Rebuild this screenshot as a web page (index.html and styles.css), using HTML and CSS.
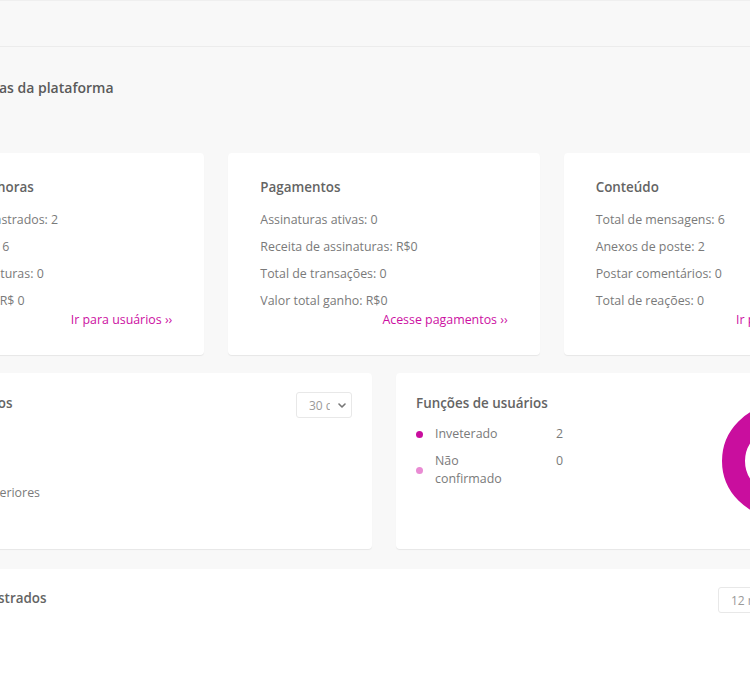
FILE: index.html
```html
<!DOCTYPE html>
<html lang="pt-BR">
<head>
<meta charset="utf-8">
<title>Estatísticas da plataforma</title>
<link rel="stylesheet" href="styles.css">
</head>
<body>
<div class="topbar"></div>
<div class="viewport">
  <main class="page">
    <h1 class="page-title">Estatísticas da plataforma</h1>

    <section class="stats-row">
      <div class="card stat-card">
        <h2 class="card-title">Últimas 24 horas</h2>
        <ul class="stat-list">
          <li>Clientes cadastrados: 2</li>
          <li>Novos posts: 6</li>
          <li>Novas assinaturas: 0</li>
          <li>Total ganho: R$ 0</li>
        </ul>
        <a class="card-link" href="#">Ir para usuários ››</a>
      </div>
      <div class="card stat-card">
        <h2 class="card-title">Pagamentos</h2>
        <ul class="stat-list">
          <li>Assinaturas ativas: 0</li>
          <li>Receita de assinaturas: R$0</li>
          <li>Total de transações: 0</li>
          <li>Valor total ganho: R$0</li>
        </ul>
        <a class="card-link" href="#">Acesse pagamentos ››</a>
      </div>
      <div class="card stat-card">
        <h2 class="card-title">Conteúdo</h2>
        <ul class="stat-list">
          <li>Total de mensagens: 6</li>
          <li>Anexos de poste: 2</li>
          <li>Postar comentários: 0</li>
          <li>Total de reações: 0</li>
        </ul>
        <a class="card-link" href="#">Ir para conteúdo ››</a>
      </div>
    </section>

    <section class="charts-row">
      <div class="card chart-card">
        <div class="chart-head">
          <h2 class="card-title">Novos usuários</h2>
          <div class="select select-short">
            <span class="select-text">30 dias</span>
            <svg class="chev" viewBox="0 0 8 5" width="8" height="5"><path d="M1 1l3 3 3-3" fill="none" stroke="#777" stroke-width="1.6" stroke-linecap="round" stroke-linejoin="round"/></svg>
          </div>
        </div>
        <div class="growth">
          <div class="growth-num">2</div>
          <div class="growth-sub">aos 30 dias anteriores</div>
        </div>
      </div>
      <div class="card chart-card roles-card">
        <div class="roles-left">
          <h2 class="card-title">Funções de usuários</h2>
          <div class="legend">
            <span class="dot dot-main"></span><span class="legend-label">Inveterado</span><span class="legend-val">2</span>
            <span class="dot dot-pale"></span><span class="legend-label">Não confirmado</span><span class="legend-val">0</span>
          </div>
        </div>
        <svg class="donut" viewBox="0 0 112 112" width="112" height="112">
          <circle cx="56" cy="56" r="44.5" fill="none" stroke="#c90e9e" stroke-width="23"/>
        </svg>
      </div>
    </section>

    <section class="card wide-card">
      <div class="chart-head">
        <h2 class="card-title">Usuários registrados</h2>
        <div class="select select-long">
          <span class="select-text">12 meses</span>
          <svg class="chev" viewBox="0 0 8 5" width="8" height="5"><path d="M1 1l3 3 3-3" fill="none" stroke="#777" stroke-width="1.6" stroke-linecap="round" stroke-linejoin="round"/></svg>
        </div>
      </div>
    </section>
  </main>
</div>
</body>
</html>
```

FILE: styles.css
```css
* { box-sizing: border-box; }

html, body {
  margin: 0;
  padding: 0;
  background: #f8f8f8;
  font-family: "Open Sans", "Liberation Sans", sans-serif;
  color: #7a7a7a;
  overflow: hidden;
}

.topbar {
  height: 47px;
  border-top: 1px solid #efefef;
  border-bottom: 1px solid #ececec;
  background: #f8f8f8;
}

.viewport {
  width: 750px;
  overflow: hidden;
}

.page {
  width: 982px;
  margin-left: -107px;
}

.page-title {
  margin: 31px 0 55px 45px;
  font-size: 14px;
  line-height: 20px;
  font-weight: 600;
  color: #5a5a5a;
}

.card {
  background: #fff;
  border-radius: 4px;
  box-shadow: 0 1px 1px rgba(0, 0, 0, 0.07);
}

.card-title {
  margin: 0;
  font-size: 13.4px;
  line-height: 20px;
  font-weight: 600;
  color: #646464;
}

.stats-row {
  display: grid;
  grid-template-columns: repeat(3, 1fr);
  column-gap: 24px;
  margin-bottom: 18px;
}

.stat-card {
  padding: 24px 32px 29px;
  display: flex;
  flex-direction: column;
}

.stat-list {
  list-style: none;
  margin: 9px 0 0;
  padding: 0;
  font-size: 12.4px;
  line-height: 27px;
}

.card-link {
  align-self: flex-end;
  font-size: 12.4px;
  line-height: 12px;
  color: #cc10a2;
  text-decoration: none;
}

.charts-row {
  display: grid;
  grid-template-columns: 1fr 1fr;
  column-gap: 24px;
  margin-bottom: 20px;
}

.chart-card {
  padding: 20px;
  height: 176px;
}

.chart-head {
  display: flex;
  justify-content: space-between;
  align-items: flex-start;
}

.select {
  display: flex;
  align-items: center;
  height: 26px;
  margin-top: -1px;
  border: 1px solid #e8e8e8;
  border-radius: 3px;
  background: #fff;
  padding-left: 12px;
  font-size: 12px;
  color: #9a9a9a;
}

.select-text {
  overflow: hidden;
  white-space: nowrap;
}

.select-short { width: 56px; }
.select-short .select-text { width: 21px; }

.select-long { width: 137px; }
.select-long .select-text { width: 100px; }

.chev { margin-left: 8px; flex: none; }

.growth {
  margin-top: 20px;
  color: #7a7a7a;
}

.growth-num {
  font-size: 28px;
  line-height: 40px;
  color: #555;
  font-weight: 600;
}

.growth-sub {
  font-size: 12.4px;
  line-height: 20px;
  margin-top: 5px;
}

.roles-card {
  display: flex;
  justify-content: space-between;
  align-items: center;
}

.roles-left {
  align-self: flex-start;
}

.legend {
  display: grid;
  grid-template-columns: 19px 90px auto;
  row-gap: 8px;
  align-items: center;
  margin-top: 12px;
  font-size: 12.4px;
  line-height: 18.5px;
}

.legend-val {
  align-self: start;
  padding-left: 31px;
}

.dot {
  width: 7px;
  height: 7px;
  border-radius: 50%;
}

.dot-main { background: #c90e9e; }
.dot-pale { background: #e98bd3; }

.donut {
  margin-right: 21px;
  flex: none;
}

.wide-card {
  padding: 19px 20px 20px;
  height: 200px;
  border-radius: 4px 4px 0 0;
}
```
